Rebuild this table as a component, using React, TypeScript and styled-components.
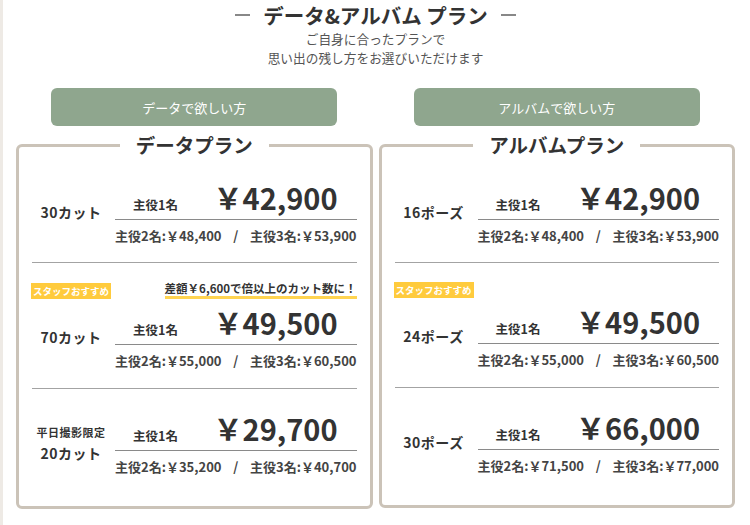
import styled, { createGlobalStyle } from "styled-components";

const GlobalStyle = createGlobalStyle`
  body {
    margin: 0;
    background: #fff;
    color: #333;
    font-family: "Noto Sans CJK JP", "Noto Sans", sans-serif;
  }
`;

const Page = styled.div`
  box-sizing: border-box;
  min-height: 525px;
  border-left: 3px solid #eeeae5;
  padding: 0 15px 0 13px;
`;

const Header = styled.header`
  padding-top: 1px;
  text-align: center;
`;

const HeadTitle = styled.h1`
  margin: 0;
  display: flex;
  justify-content: center;
  align-items: center;
  gap: 13px;
  font-size: 20.5px;
  line-height: 28px;
  font-weight: 700;
  color: #333;
`;

const Dash = styled.span`
  width: 15px;
  height: 1.5px;
  background: #888;
`;

const Lead = styled.p`
  margin: 0;
  font-size: 12.7px;
  line-height: 19px;
  color: #555;
`;

const Columns = styled.div`
  display: grid;
  grid-template-columns: 1fr 1fr;
  gap: 6px;
  margin-top: 21px;
`;

const Column = styled.section`
  display: flex;
  flex-direction: column;
  gap: 5px;
`;

const PlanButton = styled.button`
  align-self: center;
  width: 286px;
  height: 38px;
  border: none;
  border-radius: 6px;
  background: #8fa68e;
  color: #fff;
  font-family: inherit;
  font-size: 13px;
`;

const Card = styled.fieldset`
  margin: 0;
  min-width: 0;
  padding: 0 13px;
  border: 3px solid #cbc3b8;
  border-radius: 6px;
`;

const CardTitle = styled.legend`
  margin: 0 auto;
  padding: 0 16px;
  font-size: 19.5px;
  line-height: 28px;
  font-weight: 700;
  color: #333;
`;

const Row = styled.div<{ $pad: string; $last?: boolean }>`
  padding: ${(p) => p.$pad};
  border-bottom: ${(p) => (p.$last ? "none" : "1px solid #a3a3a3")};
`;

const BadgeRow = styled.div`
  display: flex;
  justify-content: space-between;
  align-items: center;
  margin: 0 0 5px -1px;
`;

const Badge = styled.span`
  padding: 2px 2px;
  background: #ffcb3d;
  color: #fff;
  font-size: 9.5px;
  line-height: 12px;
  font-weight: 700;
`;

const Note = styled.span`
  padding-bottom: 1px;
  border-bottom: 3px solid #ffd451;
  font-size: 11.5px;
  line-height: 13px;
  font-weight: 700;
  color: #333;
`;

const Main = styled.div`
  display: grid;
  grid-template-columns: 78px 1fr;
  gap: 5px;
  align-items: center;
`;

const Label = styled.div`
  text-align: center;
  font-size: 14px;
  line-height: 20px;
  font-weight: 700;
  letter-spacing: 0.5px;
  color: #333;
`;

const Limit = styled.div`
  font-size: 11px;
  line-height: 16px;
  margin-bottom: 3px;
`;

const PriceTop = styled.div`
  display: flex;
  justify-content: space-between;
  align-items: baseline;
  padding: 0 19px 4px 18px;
  border-bottom: 1px solid #8a8a8a;
`;

const Persons = styled.span`
  font-size: 12.5px;
  font-weight: 700;
  color: #333;
`;

const Price = styled.span`
  font-size: 29px;
  line-height: 36px;
  font-weight: 700;
  color: #333;
`;

const SubPrices = styled.div`
  display: flex;
  justify-content: space-between;
  margin-top: 7px;
  font-size: 13px;
  line-height: 18px;
  font-weight: 700;
  color: #444;
`;

type Plan = {
  label: string;
  limit?: string;
  price: string;
  two: string;
  three: string;
  badge?: boolean;
  note?: string;
};

const dataPlans: Plan[] = [
  { label: "30カット", price: "42,900", two: "48,400", three: "53,900" },
  {
    label: "70カット",
    price: "49,500",
    two: "55,000",
    three: "60,500",
    badge: true,
    note: "差額￥6,600で倍以上のカット数に！",
  },
  { label: "20カット", limit: "平日撮影限定", price: "29,700", two: "35,200", three: "40,700" },
];

const albumPlans: Plan[] = [
  { label: "16ポーズ", price: "42,900", two: "48,400", three: "53,900" },
  { label: "24ポーズ", price: "49,500", two: "55,000", three: "60,500", badge: true },
  { label: "30ポーズ", price: "66,000", two: "71,500", three: "77,000" },
];

const pads = ["20px 0 17px", "19px 0 18px", "21px 0 30px"];

function PlanRows({ plans }: { plans: Plan[] }) {
  return (
    <>
      {plans.map((p, i) => (
        <Row key={p.label} $pad={pads[i]} $last={i === plans.length - 1}>
          {p.badge && (
            <BadgeRow>
              <Badge>スタッフおすすめ</Badge>
              {p.note && <Note>{p.note}</Note>}
            </BadgeRow>
          )}
          <Main>
            <Label>
              {p.limit && <Limit>{p.limit}</Limit>}
              {p.label}
            </Label>
            <div>
              <PriceTop>
                <Persons>主役1名</Persons>
                <Price>￥{p.price}</Price>
              </PriceTop>
              <SubPrices>
                <span>主役2名:￥{p.two}</span>
                <span>/</span>
                <span>主役3名:￥{p.three}</span>
              </SubPrices>
            </div>
          </Main>
        </Row>
      ))}
    </>
  );
}

export default function App() {
  return (
    <Page>
      <GlobalStyle />
      <Header>
        <HeadTitle>
          <Dash />
          データ&amp;アルバム プラン
          <Dash />
        </HeadTitle>
        <Lead>
          ご自身に合ったプランで
          <br />
          思い出の残し方をお選びいただけます
        </Lead>
      </Header>

      <Columns>
        <Column>
          <PlanButton>データで欲しい方</PlanButton>
          <Card>
            <CardTitle>データプラン</CardTitle>
            <PlanRows plans={dataPlans} />
          </Card>
        </Column>
        <Column>
          <PlanButton>アルバムで欲しい方</PlanButton>
          <Card>
            <CardTitle>アルバムプラン</CardTitle>
            <PlanRows plans={albumPlans} />
          </Card>
        </Column>
      </Columns>
    </Page>
  );
}
